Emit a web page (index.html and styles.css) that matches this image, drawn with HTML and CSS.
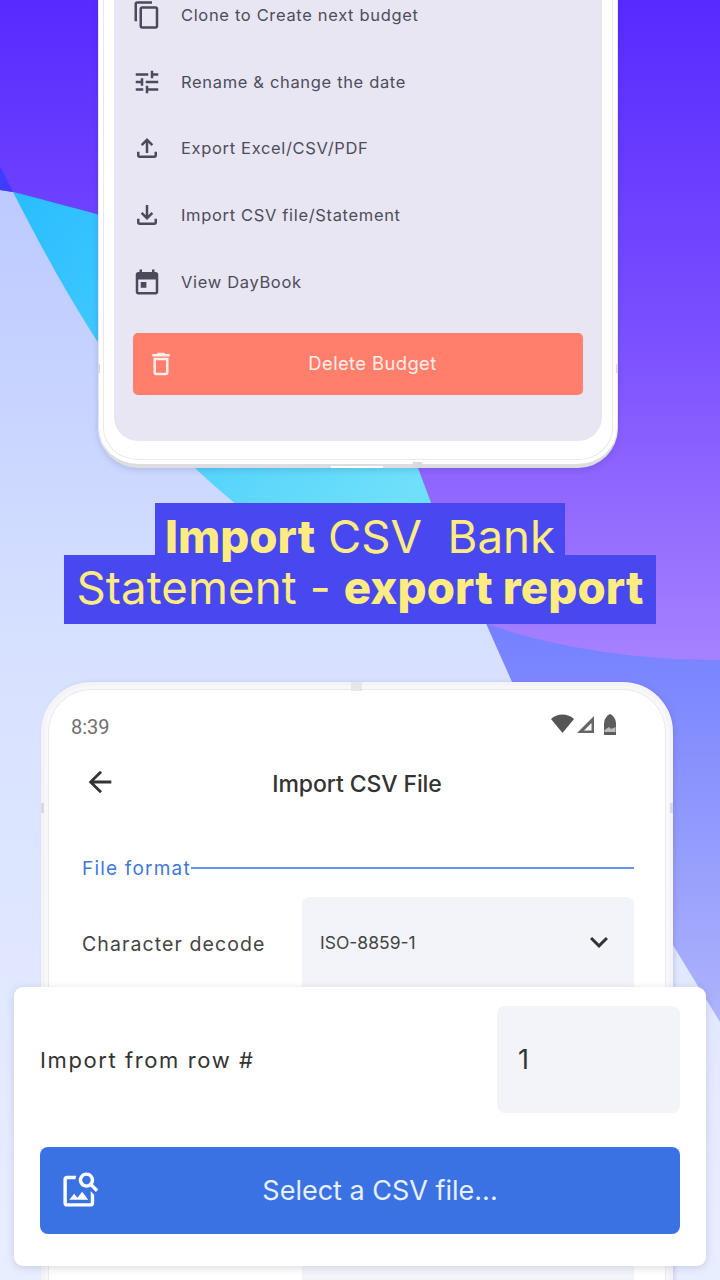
FILE: index.html
```html
<!DOCTYPE html>
<html lang="en">
<head>
<meta charset="utf-8">
<title>Import CSV</title>
<link rel="stylesheet" href="styles.css">
</head>
<body>
<div class="stage">
  <svg class="backdrop" viewBox="0 0 720 1280" aria-hidden="true">
    <defs>
      <linearGradient id="light" gradientUnits="userSpaceOnUse" x1="0" y1="190" x2="0" y2="1280">
        <stop offset="0" stop-color="#bccaff"/><stop offset=".45" stop-color="#d8e2ff"/><stop offset="1" stop-color="#e9eeff"/>
      </linearGradient>
      <linearGradient id="purple" gradientUnits="userSpaceOnUse" x1="0" y1="0" x2="0" y2="660">
        <stop offset="0" stop-color="#582aff"/><stop offset=".5" stop-color="#7a4fff"/><stop offset="1" stop-color="#a681ff"/>
      </linearGradient>
      <linearGradient id="cyan" gradientUnits="userSpaceOnUse" x1="0" y1="190" x2="400" y2="510">
        <stop offset="0" stop-color="#27bcff"/><stop offset="1" stop-color="#6fe0fa"/>
      </linearGradient>
      <linearGradient id="periwinkle" gradientUnits="userSpaceOnUse" x1="0" y1="625" x2="0" y2="1020">
        <stop offset="0" stop-color="#7480ff"/><stop offset="1" stop-color="#aeb3fb"/>
      </linearGradient>
    </defs>
    <rect width="720" height="1280" fill="url(#light)"/>
    <path d="M480 610 L512 682 L720 1022 V640 Z" fill="url(#periwinkle)"/>
    <path d="M13 192 C40 245 65 290 90 330 C125 385 165 440 197 470 C240 510 280 540 320 560 H480 L420 440 L300 240 Z" fill="url(#cyan)"/>
    <path d="M0 0 H720 V660 C640 660 555 648 490 625 L475 620 L418 468 L400 300 C300 270 130 222 13 192 L0 190 Z" fill="url(#purple)"/>
    <path d="M0 166 L13 192 L0 190 Z" fill="#3f3cff"/>
  </svg>

  <section class="phone phone-top">
    <div class="menu-screen">
      <ul class="menu">
        <li class="menu-row"><svg class="icon" viewBox="0 0 24 24"><path d="M16 1H4c-1.100 0-2 .9-2 2v14h2V3h12V1zm3 4H8c-1.100 0-2 .9-2 2v14c0 1.100.9 2 2 2h11c1.100 0 2-.9 2-2V7c0-1.100-.9-2-2-2zm0 16H8V7h11v14z"/></svg><span>Clone to Create next budget</span></li>
        <li class="menu-row"><svg class="icon" viewBox="0 0 24 24"><path d="M3 17v2h6v-2H3zM3 5v2h10V5H3zm10 16v-2h8v-2h-8v-2h-2v6h2zM7 9v2H3v2h4v2h2V9H7zm14 4v-2H11v2h10zm-6-4h2V7h4V5h-4V3h-2v6z"/></svg><span>Rename &amp; change the date</span></li>
        <li class="menu-row"><svg class="icon" viewBox="0 0 24 24"><path d="M18 15v3H6v-3H4v3c0 1.100.9 2 2 2h12c1.100 0 2-.9 2-2v-3h-2zM7 9l1.410 1.410L11 7.830V16h2V7.830l2.590 2.580L17 9l-5-5-5 5z"/></svg><span>Export Excel/CSV/PDF</span></li>
        <li class="menu-row"><svg class="icon" viewBox="0 0 24 24"><path d="M18 15v3H6v-3H4v3c0 1.100.9 2 2 2h12c1.100 0 2-.9 2-2v-3h-2zm-1-4l-1.410-1.410L13 12.170V4h-2v8.170L8.410 9.590 7 11l5 5 5-5z"/></svg><span>Import CSV file/Statement</span></li>
        <li class="menu-row"><svg class="icon" viewBox="0 0 24 24"><path d="M19 4h-1V2h-2v2H8V2H6v2H5c-1.110 0-2 .9-2 2v14c0 1.100.89 2 2 2h14c1.100 0 2-.9 2-2V6c0-1.100-.9-2-2-2zm0 16H5V10h14v10zM7 12h4.500v4.500H7z"/></svg><span>View DayBook</span></li>
      </ul>
      <button class="delete-btn">
        <svg class="delete-icon" viewBox="0 0 24 24"><path d="M6 19c0 1.100.9 2 2 2h8c1.100 0 2-.9 2-2V7H6v12zM8 9h8v10H8V9zm7.500-5l-1-1h-5l-1 1H5v2h14V4h-3.500z"/></svg>
        <span>Delete Budget</span>
      </button>
    </div>
    <i class="nub nub-left"></i><i class="nub nub-right"></i><i class="nub nub-bottom"></i><i class="notch"></i>
  </section>

  <h1 class="headline">
    <span class="line line-one"><b>Import</b> CSV&nbsp; Bank</span>
    <span class="line line-two">Statement - <b>export report</b></span>
  </h1>

  <section class="phone phone-bottom">
    <i class="nub nub-top"></i><i class="nub nub-left2"></i><i class="nub nub-right2"></i>
    <div class="status">
      <span class="time">8:39</span>
      <svg class="status-icons" viewBox="0 0 66 22">
        <path d="M0 5 C6 -1 17 -1 23 5 L11.500 19 Z" fill="#555"/>
        <path d="M26 19 L43 2 V19 Z M33 16.500 H40.500 V9 Z" fill="#666" fill-rule="evenodd"/>
        <path d="M53 21 V10 C53 6 55 2 59 0 C63 2 65 6 65 10 V21 Z" fill="#5c5c5c"/>
        <path d="M53.500 16 L58 13 L60 15 L64.500 13 V18 H53.500 Z" fill="#bbb"/>
      </svg>
    </div>
    <header class="appbar">
      <svg class="back" viewBox="0 0 24 24"><path d="M20 11H7.830l5.590-5.590L12 4l-8 8 8 8 1.410-1.410L7.830 13H20v-2z"/></svg>
      <h2>Import CSV File</h2>
    </header>
    <div class="section-title"><span>File format</span><i></i></div>
    <div class="form-row">
      <span class="form-label">Character decode</span>
      <div class="select"><span>ISO-8859-1</span><svg class="chevron" viewBox="0 0 24 24"><path d="M16.590 8.590L12 13.170 7.410 8.590 6 10l6 6 6-6z"/></svg></div>
    </div>
    <div class="form-row next-row"><span class="form-label"></span><div class="select"></div></div>
  </section>

  <section class="card">
    <div class="card-row">
      <span class="card-label">Import from row #</span>
      <div class="row-input">1</div>
    </div>
    <button class="select-btn">
      <svg class="select-icon" viewBox="0 0 24 24"><path d="M18 13v7H4V6h5.020c.05-.71.22-1.380.48-2H4c-1.100 0-2 .9-2 2v14c0 1.100.9 2 2 2h14c1.100 0 2-.9 2-2v-5l-2-2zm-1.500 5h-11l2.750-3.530 1.960 2.360 2.750-3.540L16.500 18zm2.800-9.110c.44-.7.7-1.510.7-2.390C20 4.010 17.990 2 15.500 2S11 4.010 11 6.500s2.010 4.500 4.490 4.500c.88 0 1.700-.26 2.390-.7L21 13.420 22.420 12 19.300 8.890zM15.500 9C14.120 9 13 7.880 13 6.500S14.120 4 15.500 4 18 5.120 18 6.500 16.880 9 15.500 9z"/></svg>
      <span>Select a CSV file...</span>
    </button>
  </section>
</div>
</body>
</html>
```

FILE: styles.css
```css
* { box-sizing: border-box; }
html, body { margin: 0; padding: 0; }
body { width: 720px; height: 1280px; overflow: hidden; font-family: Inter, "Noto Sans", sans-serif; }
.stage { position: relative; width: 720px; height: 1280px; overflow: hidden; display: flow-root; }
.backdrop { position: absolute; inset: 0; width: 720px; height: 1280px; display: block; }

.phone { position: relative; background: #fff; }
.phone-top {
  width: 520px; height: 486px; margin: -18px 0 0 98px;
  padding: 0 16px 23px;
  border: 1px solid #e6e6ea; border-top: 0;
  border-bottom: 4px solid #dddde1;
  border-radius: 0 0 40px 40px;
  box-shadow: inset 0 0 0 4px #fff, inset 0 0 0 5px #e9e9ed, 0 2px 6px rgba(40,40,110,.16);
}
.menu-screen {
  height: 100%; background: #e8e6f3; border-radius: 0 0 24px 24px;
  padding: 0 19px 46px; margin: 0 -1px -1px;
  display: flex; flex-direction: column;
}
.menu { list-style: none; margin: 0; padding: 0; flex: none; }
.menu-row { height: 66.6px; display: flex; align-items: center; color: #4d4d5b; font-size: 16.5px; letter-spacing: .66px; }
.icon { width: 30px; height: 30px; fill: #4a4a58; margin-left: -1px; margin-right: 19px; flex: none; }
.delete-btn {
  flex: none; margin-top: 18px; height: 62px; width: 450px; border: 0; border-radius: 5px;
  background: #ff7e6c; color: #ffeee9; font: 400 18.4px Inter, sans-serif; letter-spacing: .4px;
  position: relative; display: flex; align-items: center; justify-content: center; padding: 0 0 2px 29px;
}
.delete-icon { position: absolute; left: 13px; top: 16px; width: 30px; height: 30px; fill: #ffeee9; }
.nub { position: absolute; background: #d9dae1; }
.nub-left { left: -1px; top: 382px; width: 2px; height: 9px; }
.nub-right { right: -1px; top: 382px; width: 2px; height: 9px; }
.nub-bottom { left: 314px; bottom: -4px; width: 9px; height: 6px; }
.notch { position: absolute; left: 232px; bottom: -4px; width: 52px; height: 2px; background: #fff; }

.headline { position: relative; margin: 35px 0 0; font-weight: 400; font-size: 45.6px; color: #ffec80; text-align: center; line-height: 1; }
.line { display: block; width: fit-content; margin: 0 auto; background: #4848f0; white-space: nowrap; }
.line b { font-weight: 800; }
.line-one { height: 52px; padding: 11px 10px 0; line-height: 46px; }
.line-two { height: 69px; padding: 9px 12px 0; line-height: 48px; letter-spacing: .1px; }

.phone-bottom {
  width: 632px; height: 720px; margin: 58px 0 0 41px;
  border: 4px solid #f4f4f7; border-bottom: 0; border-radius: 50px 50px 0 0;
  box-shadow: inset 0 0 0 3px #f8f8fa, inset 0 0 0 4px #ebebef, 2px 0 4px rgba(90,90,150,.18);
}
.nub-top { left: 306px; top: -4px; width: 11px; height: 9px; background: #e6e6ea; }
.nub-left2 { left: -4px; top: 117px; width: 3px; height: 10px; }
.nub-right2 { right: -4px; top: 117px; width: 3px; height: 10px; }
.status { display: flex; justify-content: space-between; align-items: center; padding: 28px 52px 0 26px; height: 53px; }
.time { font: 400 20px Roboto, sans-serif; color: #707070; line-height: 24px; }
.status-icons { width: 66px; height: 22px; margin-top: -4px; }
.appbar { position: relative; margin-top: 25px; height: 40px; display: flex; align-items: center; justify-content: center; }
.appbar h2 { margin: 0; font-size: 23px; font-weight: 500; color: #333; letter-spacing: -.1px; }
.back { position: absolute; left: 38px; top: 1px; width: 34px; height: 34px; fill: #333; }
.section-title { display: flex; align-items: center; margin: 51px 35px 0 37px; color: #3f77de; font-size: 19px; letter-spacing: 1.2px; height: 26px; }
.section-title i { flex: 1; height: 2px; background: #6a92e6; margin-top: -1px; }
.form-row { display: flex; align-items: flex-start; margin: 16px 35px 0 37px; }
.form-label { width: 220px; flex: none; font-size: 19.5px; color: #444; letter-spacing: 1.1px; padding-top: 35px; }
.select { flex: 1; height: 93px; background: #f3f4f9; border-radius: 8px 8px 0 0; display: flex; justify-content: space-between; padding: 35px 20px 0 18px; color: #444; font-size: 17.5px; }
.chevron { width: 36px; height: 36px; fill: #333; margin: -8px -3px 0 0; }
.next-row { margin-top: 230px; }

.card {
  position: absolute; left: 14px; top: 987px; width: 692px; height: 279px;
  background: #fff; border-radius: 9px; padding: 19px 26px 0;
  box-shadow: 0 2px 8px rgba(60,60,110,.18);
}
.card-row { display: flex; justify-content: space-between; align-items: center; }
.card-label { font-size: 22px; color: #333; letter-spacing: 1.6px; }
.row-input { width: 183px; height: 107px; background: #f3f4f9; border-radius: 8px; padding: 0 0 0 21px; display: flex; align-items: center; font-size: 27px; color: #333; }
.select-btn {
  position: relative; margin-top: 34px; width: 640px; height: 87px; border: 0; border-radius: 8px;
  background: #3b72e3; color: #e8f0ff; font: 400 27px Inter, sans-serif; letter-spacing: 0;
  display: flex; align-items: center; justify-content: center; padding: 0 0 0 40px;
}
.select-icon { position: absolute; left: 20px; top: 22px; width: 41px; height: 41px; fill: #fff; }
```
